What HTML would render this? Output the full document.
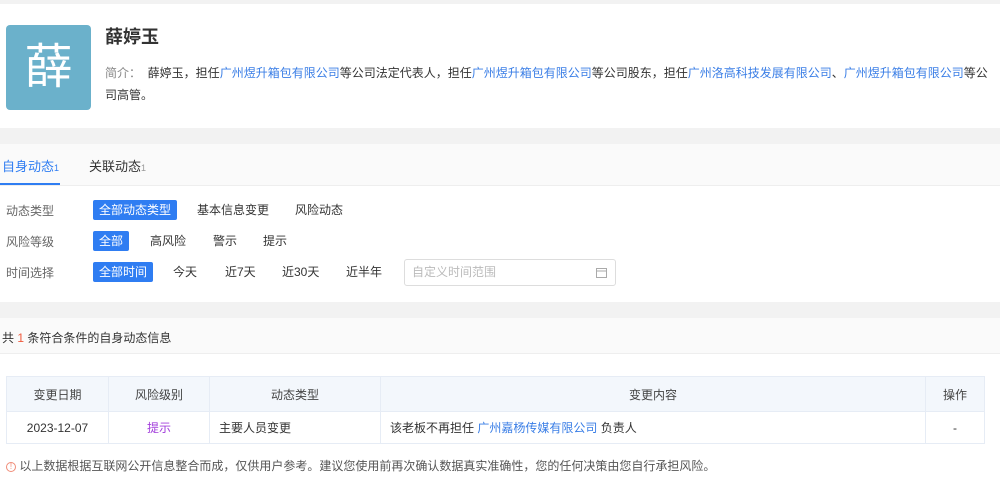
<!DOCTYPE html>
<html><head><meta charset="utf-8"><style>
*{margin:0;padding:0;box-sizing:border-box}
body{width:1000px;height:484px;overflow:hidden;background:#fff;font-family:"Liberation Sans","Noto Sans CJK SC",sans-serif;color:#333;font-size:12px;position:relative}
.a{position:absolute}
.blue{color:#3a7ee6}
.btn{position:absolute;height:20px;line-height:20px;font-size:12px;padding:0 6px;border-radius:2px}
.on{background:#2f7df2;color:#fff}
table{border-collapse:collapse;position:absolute;left:6px;top:376px;width:979px}
td{border:1px solid #e6ecf5;text-align:center;font-size:12px}
thead td{background:#f3f7fc;height:35px;color:#444}
tbody td{height:32px}
</style></head><body>
<div class="a" style="left:0;top:0;width:1000px;height:4px;background:#f2f2f2"></div>
<div class="a" style="left:6px;top:25px;width:85px;height:85px;background:#6bb1cb;border-radius:4px;color:#fff;font-size:48px;line-height:85px;text-align:center">薛</div>
<div class="a" style="left:105px;top:23px;font-size:18px;font-weight:bold;color:#333">薛婷玉</div>
<div class="a" style="left:105px;top:62px;width:895px;line-height:22px;font-size:12px;color:#333;white-space:nowrap"><span style="color:#888">简介：</span>&nbsp; 薛婷玉，担任<span class="blue">广州煜升箱包有限公司</span>等公司法定代表人，担任<span class="blue">广州煜升箱包有限公司</span>等公司股东，担任<span class="blue">广州洛高科技发展有限公司</span>、<span class="blue">广州煜升箱包有限公司</span>等公<br>司高管。</div>
<div class="a" style="left:0;top:128px;width:1000px;height:16px;background:#f2f2f2"></div>
<div class="a" style="left:0;top:144px;width:1000px;height:42px;background:#fafafa;border-bottom:1px solid #eee"></div>
<div class="a" style="left:2px;top:156px;font-size:13px;color:#2f7df2">自身动态<span style="font-size:9px">1</span></div>
<div class="a" style="left:0;top:183px;width:60px;height:2px;background:#2f7df2"></div>
<div class="a" style="left:89px;top:156px;font-size:13px;color:#333">关联动态<span style="font-size:9px;color:#999">1</span></div>
<div class="a" style="left:6px;top:202px;color:#666">动态类型</div>
<div class="a" style="left:6px;top:233px;color:#666">风险等级</div>
<div class="a" style="left:6px;top:264px;color:#666">时间选择</div>
<div class="btn on" style="left:93px;top:200px">全部动态类型</div>
<div class="btn" style="left:191px;top:200px">基本信息变更</div>
<div class="btn" style="left:289px;top:200px">风险动态</div>
<div class="btn on" style="left:93px;top:231px">全部</div>
<div class="btn" style="left:144px;top:231px">高风险</div>
<div class="btn" style="left:207px;top:231px">警示</div>
<div class="btn" style="left:257px;top:231px">提示</div>
<div class="btn on" style="left:93px;top:262px">全部时间</div>
<div class="btn" style="left:167px;top:262px">今天</div>
<div class="btn" style="left:219px;top:262px">近7天</div>
<div class="btn" style="left:276px;top:262px">近30天</div>
<div class="btn" style="left:340px;top:262px">近半年</div>
<div class="a" style="left:404px;top:259px;width:212px;height:27px;border:1px solid #ddd;border-radius:3px;color:#bbb;line-height:25px;padding-left:7px">自定义时间范围
<svg style="position:absolute;right:8px;top:7px" width="11" height="11" viewBox="0 0 11 11"><rect x="0.5" y="1.5" width="10" height="9" fill="none" stroke="#aaa"/><line x1="0.5" y1="4" x2="10.5" y2="4" stroke="#aaa"/></svg></div>
<div class="a" style="left:0;top:302px;width:1000px;height:16px;background:#f2f2f2"></div>
<div class="a" style="left:0;top:318px;width:1000px;height:36px;background:#fafafa;border-bottom:1px solid #eee"></div>
<div class="a" style="left:2px;top:329px">共 <span style="color:#f05a3c">1</span> 条符合条件的自身动态信息</div>
<table><thead><tr><td style="width:102px">变更日期</td><td style="width:101px">风险级别</td><td style="width:171px">动态类型</td><td style="width:545px">变更内容</td><td>操作</td></tr></thead>
<tbody><tr><td>2023-12-07</td><td style="color:#a23ddb">提示</td><td style="text-align:left;padding-left:9px">主要人员变更</td><td style="text-align:left;padding-left:9px">该老板不再担任 <span class="blue">广州嘉杨传媒有限公司</span> 负责人</td><td>-</td></tr></tbody></table>
<div class="a" style="left:6px;top:457px;color:#555"><span style="display:inline-block;width:10px;height:10px;border:1px solid #f08c78;border-radius:50%;color:#f08c78;font-size:8px;line-height:8px;text-align:center;vertical-align:1px">!</span> 以上数据根据互联网公开信息整合而成，仅供用户参考。建议您使用前再次确认数据真实准确性，您的任何决策由您自行承担风险。</div>
</body></html>
